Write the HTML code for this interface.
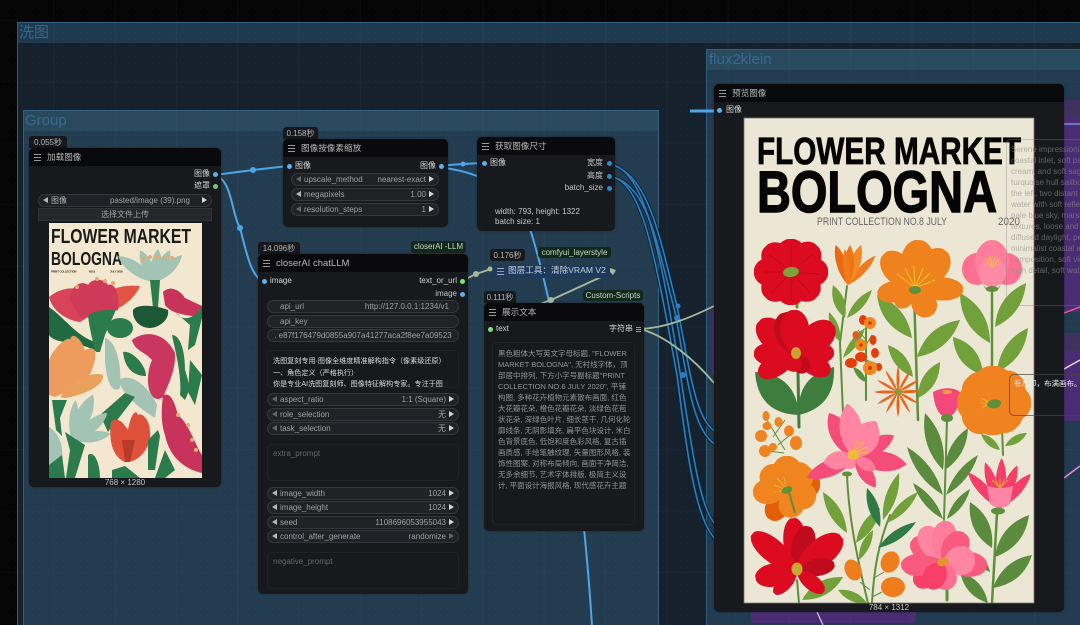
<!DOCTYPE html>
<html><head><meta charset="utf-8"><style>
html,body{margin:0;padding:0;background:#050505;width:1080px;height:625px;overflow:hidden}
#r{position:relative;width:1080px;height:625px;overflow:hidden;background:#050505;font-family:"Liberation Sans","Noto Sans CJK SC",sans-serif;font-size:8px;color:#c0c0c0;filter:blur(.3px)}
.a{position:absolute}
.g{position:absolute;box-sizing:border-box;border:1px solid #35607d;border-right:0;border-bottom:0}
.gh{position:absolute;left:0;right:0;top:0;height:20px}
.gt{position:absolute;left:1px;top:0;font-size:15px;line-height:20px;color:#386b8c;white-space:nowrap}
.n{position:absolute;background:#18191c;border-radius:5px;overflow:hidden;box-shadow:0 0 2px #0006}
.h{position:absolute;left:0;right:0;top:0;height:18px;background:#0a0a0c}
.m{position:absolute;left:5px;top:6px;width:7px;height:5px;border-top:1px solid #999;border-bottom:1px solid #999;box-sizing:content-box}
.m:after{content:"";position:absolute;left:0;right:0;top:2px;height:1px;background:#999}
.ti{position:absolute;left:18px;top:0;line-height:19px;font-size:9.5px;color:#b8b8b8;white-space:nowrap}
.t{position:absolute;white-space:nowrap;line-height:12px;height:12px}
.b{position:absolute;background:#16181b;color:#b4b4b4;border-radius:3px 3px 0 0;height:12px;line-height:13px;text-align:center;font-size:8px}
.tag{position:absolute;background:#12281a;color:#c8d8c8;border-radius:3px;line-height:12px;height:12px;text-align:center;font-size:8px;white-space:nowrap}
.w{position:absolute;box-sizing:border-box;height:13px;border:1px solid #36373c;border-radius:7px;background:#212226;color:#a0a0a0;line-height:11px;white-space:nowrap}
.w .k{position:absolute;left:12px}
.w .v{position:absolute;right:12px}
.l,.r{position:absolute;top:2px;width:0;height:0;border-top:3.5px solid transparent;border-bottom:3.5px solid transparent}
.l{left:4px;border-right:5px solid #b8b8b8}
.r{right:4px;border-left:5px solid #d8d8d8}
.l.d{border-right-color:#666}.r.d{border-left-color:#666}
.o{position:absolute;width:5px;height:5px;border-radius:50%}
.bx{position:absolute;box-sizing:border-box;border:1px solid #212226;border-radius:5px}
.ph{position:absolute;left:5px;top:3px;color:#666;line-height:12px}
svg{position:absolute;left:0;top:0}
</style></head><body><div id="r">

<!-- groups -->
<div class="g" style="left:17px;top:22px;width:1063px;height:603px;background:#15222d"><div class="gh" style="background:#1f3a50"></div><div class="gt" style="color:#376785">洗图</div></div>
<div class="g" style="left:23px;top:110px;width:636px;height:515px;background:#233c50;border-right:1px solid #35607d"><div class="gh" style="background:#29495f"></div><div class="gt">Group</div></div>
<div class="g" style="left:706px;top:49px;width:374px;height:576px;background:#223b50"><div class="gh" style="background:#29495f"></div><div class="gt" style="left:2px">flux2klein</div></div>
<div class="a" style="left:1064px;top:100px;width:16px;height:212px;background:#4a2c74"></div>
<div class="a" style="left:1064px;top:100px;width:16px;height:18px;background:#3f3260"></div>
<div class="a" style="left:1064px;top:333px;width:16px;height:88px;background:#4a2c74"></div>
<div class="a" style="left:1064px;top:333px;width:16px;height:18px;background:#3f3260"></div>
<div class="a" style="left:712px;top:310px;width:2px;height:64px;background:#4a2c74"></div>
<div class="a" style="left:751px;top:600px;width:165px;height:23px;background:#4a2c74;border-radius:0 0 4px 4px"></div>
<!-- grid -->
<div class="a" style="left:0;top:0;width:1080px;height:625px;background-image:linear-gradient(90deg,rgba(255,255,255,.025) 1px,transparent 1px),linear-gradient(rgba(255,255,255,.02) 1px,transparent 1px),radial-gradient(rgba(255,255,255,.035) .6px,transparent .8px);background-size:61.3px 61.3px,61.3px 61.3px,6px 6px;background-position:-8px 20px,-8px 20px,0 0"></div>

<!-- wires -->
<svg width="1080" height="625" viewBox="0 0 1080 625" fill="none">
<g stroke="#0c2438" stroke-width="3.6">
<path d="M610 164C650 175 660 240 677 306C690 370 695 420 716 432"/><path d="M610 176C648 185 656 240 675 312C688 380 692 430 716 445"/>
<path d="M610 164C645 170 660 250 680 372C692 450 700 510 716 525"/><path d="M610 176C642 182 654 250 677 375C688 460 696 520 716 540"/>
</g>
<g stroke="#2e7dbc" stroke-width="1.6">
<path d="M610 164C650 175 660 240 677 306C690 370 695 420 716 432"/><path d="M610 176C648 185 656 240 675 312C688 380 692 430 716 445"/>
<path d="M610 164C645 170 660 250 680 372C692 450 700 510 716 525"/><path d="M610 176C642 182 654 250 677 375C688 460 696 520 716 540"/>
</g>
<g fill="#2e7dbc"><circle cx="678" cy="306" r="2.5"/><circle cx="677" cy="318" r="3"/><circle cx="683" cy="375" r="3"/></g>
<g stroke="#4da6ea" stroke-width="2">
<path d="M215 175L253 170L288 166"/>
<path d="M217 176C232 182 232 215 240 228C246 250 250 274 262 281"/>
<path d="M436 166L463 164L482 163"/>
<path d="M436 167C465 170 510 178 531 232C552 300 580 440 592 625"/>
</g>
<path d="M690 111H716" stroke="#4da6ea" stroke-width="3"/>
<g fill="#4da6ea"><circle cx="253" cy="170" r="3"/><circle cx="240" cy="228" r="3"/><circle cx="463" cy="164" r="2.5"/></g>
<g stroke="#a8b89a" stroke-width="1.8">
<path d="M462 281L476 274L491 269"/>
<path d="M612 272L551 300L540 304"/>
<path d="M640 329C665 328 690 318 714 306"/>
<path d="M640 329C665 335 695 360 714 383"/>
</g>
<g fill="#a8b89a"><circle cx="476" cy="274" r="3"/><circle cx="551" cy="300" r="3"/><path d="M608 268L614 270L611 275L606 274Z"/></g>
<path d="M1064 124H1080" stroke="#7a8be0" stroke-width="1.5"/>
<path d="M1064 313L1080 307" stroke="#e85a90" stroke-width="1.5"/>
<path d="M1064 369L1080 360" stroke="#e6d8e6" stroke-width="1.5"/>
<path d="M1064 478L1080 466" stroke="#f08ae0" stroke-width="1.5"/>
<path d="M817 612L823 625" stroke="#cfc8d8" stroke-width="1.2"/>
</svg>

<!-- load image -->
<div class="b" style="left:29px;top:136px;width:38px">0.055秒</div>
<div class="n" style="left:29px;top:148px;width:192px;height:339px">
<div class="h"></div><div class="m"></div><div class="ti" style="font-size:8.6px">加载图像</div>
<div class="t" style="right:11px;top:20px;color:#d4d4d4">图像</div><div class="o" style="left:184px;top:24px;background:#5ab0f0"></div>
<div class="t" style="right:11px;top:32px;color:#d4d4d4">遮罩</div><div class="o" style="left:184px;top:36px;background:#74c77a"></div>
<div class="w" style="left:9px;top:46px;width:174px"><i class="l"></i><span class="k" style="color:#b4b4b4">图像</span><span class="v" style="right:21px">pasted/image (39).png</span><i class="r"></i></div>
<div class="a" style="left:9px;top:60px;width:174px;height:13px;background:#26272b;border:1px solid #333;box-sizing:border-box;text-align:center;line-height:11px;color:#a0a0a0">选择文件上传</div>
<div class="a" style="left:0;right:0;top:330px;text-align:center;line-height:10px;color:#c4c4c4;font-size:8px">768 × 1280</div>
</div>
<svg width="1080" height="625" viewBox="0 0 1080 625">
<defs>
<clipPath id="cp1"><rect x="49" y="223" width="153" height="255"/></clipPath>
<clipPath id="cp2"><rect x="744" y="118" width="290" height="485"/></clipPath>
<path id="p" d="M0 0C-.65-.25-.6-.9-.1-1C0-1 0-1 .1-1C.6-.9.65-.25 0 0Z"/>
<path id="q" d="M0 0C-.5-.3-.5-.75 0-1C.5-.75.5-.3 0 0Z"/>
</defs>
<g clip-path="url(#cp1)">
<rect x="49" y="223" width="153" height="255" fill="#f3e8cf"/>
<g fill="#1a1a1a" font-family="Liberation Sans" font-weight="bold">
<text x="51" y="243" font-size="20.5" textLength="140" lengthAdjust="spacingAndGlyphs">FLOWER MARKET</text>
<text x="51" y="265" font-size="18" textLength="71" lengthAdjust="spacingAndGlyphs">BOLOGNA</text>
<text x="51" y="272.5" font-size="2.6">PRINT COLLECTION</text><text x="89" y="272.5" font-size="2.6">NO.8</text><text x="110" y="272.5" font-size="2.6">JULY 2020</text>
</g>
<!-- teal top -->
<g fill="#a3c4b4"><use href="#q" transform="translate(155 282) rotate(-55) scale(16 45)"/><use href="#q" transform="translate(155 282) rotate(-25) scale(14 35)"/><use href="#q" transform="translate(155 282) rotate(5) scale(14 33)"/><use href="#q" transform="translate(155 282) rotate(25) scale(14 35)"/><use href="#q" transform="translate(155 282) rotate(45) scale(14 38)"/></g>
<g fill="#e8a96a"><circle cx="143" cy="259" r="2"/><circle cx="150" cy="257" r="2"/><circle cx="157" cy="257" r="2"/><circle cx="165" cy="258" r="2"/><circle cx="172" cy="258" r="2"/></g>
<path d="M150 280L160 280L158 308L153 308Z" fill="#2b7b4c"/>
<path d="M133 310C138 303 158 306 168 310C170 320 158 328 150 328C140 328 132 320 133 310Z" fill="#1d5836"/>
<!-- coral flower -->
<path d="M49 297C70 280 95 290 100 310L80 322C65 320 52 310 49 297Z" fill="#d9435a"/>
<path d="M140 286C120 284 100 290 95 312L112 312C125 305 135 298 140 286Z" fill="#e25544"/>
<path d="M70 300C70 285 82 280 88 285C92 278 104 278 108 285C114 282 120 292 118 310L80 318Z" fill="#cf3a5a"/>
<g fill="#e8a96a"><circle cx="77" cy="287" r="2"/><circle cx="97" cy="279" r="2"/><circle cx="105" cy="281" r="2"/><circle cx="113" cy="283" r="2"/></g>
<path d="M49 307C65 318 75 335 95 342L100 350L97 352C80 340 55 345 49 335Z" fill="#1f6a41"/>
<path d="M88 316C90 310 120 308 115 312L105 335L100 352L96 352C92 340 90 330 88 316Z" fill="#2b7b4c"/>
<ellipse cx="120" cy="328" rx="13" ry="10" fill="#2b7b4c"/>
<!-- right top pink -->
<path d="M163 292C170 285 180 290 185 298L202 306L202 318C190 315 172 315 165 305Z" fill="#c8335c"/>
<path d="M175 312C185 325 198 315 202 305L202 318L195 345L188 350L190 325Z" fill="#2b7b4c"/>
<!-- right pink mid -->
<path d="M132 340C145 330 165 332 175 353C176 370 168 385 163 397C155 403 148 395 148 380C148 370 150 365 152 360C145 352 134 350 132 340Z" fill="#c9365f"/>
<path d="M172 335C180 335 185 350 185 370C190 385 190 390 185 400L180 395C182 375 175 350 172 335Z" fill="#2b7b4c"/>
<path d="M190 360L202 375L195 405L188 392Z" fill="#2b7b4c"/>
<!-- orange -->
<path d="M49 360C55 345 70 335 70 340C72 330 82 340 85 350C95 345 100 350 90 375C85 385 70 390 55 397L49 395Z" fill="#ee9b5e"/>
<path d="M60 397C70 385 90 370 103 375C105 385 85 395 65 398Z" fill="#e8a25c"/>
<path d="M52 400L67 400L60 418L62 436L56 430Z" fill="#2b7b4c"/>
<!-- teal centre -->
<path d="M105 338C116 340 122 365 120 388C112 395 106 380 105 360Z" fill="#a3c4b4"/>
<path d="M118 380C130 372 148 385 157 405L155 418C140 408 125 398 118 380Z" fill="#a3c4b4"/>
<path d="M123 352C132 350 146 365 146 376C135 376 125 370 123 352Z" fill="#2b7b4c"/>
<path d="M100 415L125 393L135 397L108 432Z" fill="#2b7b4c"/>
<!-- teal lower -->
<g fill="#a3c4b4"><use href="#q" transform="translate(72 440) rotate(25) scale(20 50)"/><use href="#q" transform="translate(75 440) rotate(50) scale(16 42)"/><use href="#q" transform="translate(75 440) rotate(80) scale(14 36)"/><use href="#q" transform="translate(72 440) rotate(5) scale(12 40)"/></g>
<path d="M49 427C58 432 64 445 62 460L49 470Z" fill="#a3c4b4"/>
<path d="M65 432L85 445L75 478L66 478L70 450Z" fill="#2b7b4c"/>
<path d="M49 465L62 455L65 478H49Z" fill="#2b7b4c"/>
<path d="M88 455C95 450 100 465 100 478H88Z" fill="#2b7b4c"/>
<!-- red flower -->
<path d="M111 422C118 415 125 425 128 430C130 418 135 407 138 415C142 412 150 420 150 432C152 445 140 463 125 462C115 458 108 445 111 422Z" fill="#e0513c"/>
<path d="M122 440H135L130 462H125Z" fill="#b83b2a"/>
<path d="M112 470L125 466L140 478H112Z" fill="#2b7b4c"/>
<!-- pink lower -->
<path d="M163 395C172 392 175 405 178 415C190 425 195 445 202 455L202 473C188 470 170 460 165 435C160 420 162 405 163 395Z" fill="#c8335c"/>
<g fill="#e8a96a"><circle cx="178" cy="415" r="2"/><circle cx="188" cy="425" r="2"/><circle cx="192" cy="440" r="2"/><circle cx="196" cy="450" r="2"/></g>
<path d="M165 450L175 470L165 478H155Z" fill="#2b7b4c"/>
<path d="M148 440L158 430L160 436L155 470H148Z" fill="#2b7b4c"/>
</g>
</svg>

<!-- scale node -->
<div class="b" style="left:283px;top:127px;width:35px">0.158秒</div>
<div class="n" style="left:283px;top:139px;width:165px;height:88px">
<div class="h"></div><div class="m"></div><div class="ti" style="font-size:8.6px">图像按像素缩放</div>
<div class="o" style="left:4px;top:25px;background:#5ab0f0"></div><div class="t" style="left:12px;top:21px;color:#d4d4d4">图像</div>
<div class="t" style="right:12px;top:21px;color:#d4d4d4">图像</div><div class="o" style="left:156px;top:25px;background:#5ab0f0"></div>
<div class="w" style="left:8px;top:34px;width:148px"><i class="l d"></i><span class="k">upscale_method</span><span class="v">nearest-exact</span><i class="r"></i></div>
<div class="w" style="left:8px;top:49px;width:148px"><i class="l"></i><span class="k">megapixels</span><span class="v">1.00</span><i class="r"></i></div>
<div class="w" style="left:8px;top:64px;width:148px"><i class="l d"></i><span class="k">resolution_steps</span><span class="v">1</span><i class="r"></i></div>
</div>

<!-- get size -->
<div class="n" style="left:477px;top:137px;width:138px;height:94px">
<div class="h"></div><div class="m"></div><div class="ti" style="font-size:8.6px">获取图像尺寸</div>
<div class="o" style="left:5px;top:24px;background:#5ab0f0"></div><div class="t" style="left:13px;top:20px;color:#d4d4d4">图像</div>
<div class="t" style="right:12px;top:20px;color:#c4c4c4">宽度</div><div class="o" style="left:130px;top:24px;background:#2f8ac8"></div>
<div class="t" style="right:12px;top:33px;color:#c4c4c4">高度</div><div class="o" style="left:130px;top:37px;background:#2f8ac8"></div>
<div class="t" style="right:12px;top:45px;color:#c4c4c4">batch_size</div><div class="o" style="left:130px;top:49px;background:#2f8ac8"></div>
<div class="t" style="left:18px;top:69px;color:#c8c8c8">width: 793, height: 1322</div>
<div class="t" style="left:18px;top:79px;color:#c8c8c8">batch size: 1</div>
</div>

<!-- closerAI -->
<div class="b" style="left:258px;top:242px;width:42px">14.096秒</div>
<div class="tag" style="left:411px;top:241px;width:55px">closerAI -LLM</div>
<div class="n" style="left:258px;top:254px;width:210px;height:340px">
<div class="h"></div><div class="m"></div><div class="ti">closerAI chatLLM</div>
<div class="o" style="left:4px;top:25px;background:#5ab0f0"></div><div class="t" style="left:12px;top:21px;color:#d4d4d4">image</div>
<div class="t" style="right:11px;top:21px;color:#d4d4d4">text_or_url</div><div class="o" style="left:202px;top:25px;background:#7fe07a"></div>
<div class="t" style="right:11px;top:34px;color:#c4c4c4">image</div><div class="o" style="left:202px;top:38px;background:#5ab0f0"></div>
<div class="w" style="left:9px;top:46px;width:192px"><span class="k">api_url</span><span class="v" style="right:9px">http://127.0.0.1:1234/v1</span></div>
<div class="w" style="left:9px;top:61px;width:192px"><span class="k">api_key</span></div>
<div class="w" style="left:9px;top:75px;width:192px;text-align:center">. e87f176479d0855a907a41277aca2f8ee7a09523</div>
<div class="bx" style="left:9px;top:96px;width:192px;height:38px;overflow:hidden"><div style="position:absolute;left:5px;top:5px;width:186px;white-space:nowrap;line-height:11.5px;color:#dcdcdc;font-size:7.1px">洗图复刻专用·图像全维度精准解构指令（像素级还原）<br>一、角色定义（严格执行）<br>你是专业AI洗图复刻师、图像特征解构专家。专注于图</div></div>
<div class="w" style="left:9px;top:139px;width:192px"><i class="l d"></i><span class="k">aspect_ratio</span><span class="v">1:1 (Square)</span><i class="r"></i></div>
<div class="w" style="left:9px;top:154px;width:192px"><i class="l d"></i><span class="k">role_selection</span><span class="v">无</span><i class="r"></i></div>
<div class="w" style="left:9px;top:168px;width:192px"><i class="l d"></i><span class="k">task_selection</span><span class="v">无</span><i class="r"></i></div>
<div class="bx" style="left:9px;top:190px;width:192px;height:37px"><div class="ph">extra_prompt</div></div>
<div class="w" style="left:9px;top:233px;width:192px"><i class="l"></i><span class="k">image_width</span><span class="v">1024</span><i class="r"></i></div>
<div class="w" style="left:9px;top:247px;width:192px"><i class="l"></i><span class="k">image_height</span><span class="v">1024</span><i class="r"></i></div>
<div class="w" style="left:9px;top:262px;width:192px"><i class="l"></i><span class="k">seed</span><span class="v">1108696053955043</span><i class="r"></i></div>
<div class="w" style="left:9px;top:276px;width:192px"><i class="l"></i><span class="k">control_after_generate</span><span class="v">randomize</span><i class="r d"></i></div>
<div class="bx" style="left:9px;top:298px;width:192px;height:37px"><div class="ph">negative_prompt</div></div>
</div>

<!-- layerstyle -->
<div class="b" style="left:490px;top:249px;width:35px;border-radius:3px">0.176秒</div>
<div class="tag" style="left:538px;top:247px;width:73px;height:11px;line-height:11px">comfyui_layerstyle</div>
<div class="a" style="left:490px;top:265px;width:122px;height:13px;background:#1d3a5c;border-radius:6px"></div>
<div class="m a" style="left:497px;top:268px;border-color:#aab;"></div>
<div class="t" style="left:508px;top:264px;font-size:8.6px;line-height:13px;color:#c4ccd8">图层工具：清除VRAM V2</div>
<svg width="1080" height="625" viewBox="0 0 1080 625"><circle cx="490" cy="269" r="2.5" fill="#a8b89a"/><path d="M610 268L616 270L613 275L610 272Z" fill="#a8b89a"/></svg>

<!-- show text -->
<div class="b" style="left:484px;top:291px;width:32px">0.111秒</div>
<div class="tag" style="left:583px;top:290px;width:60px;height:11px;line-height:11px">Custom-Scripts</div>
<div class="n" style="left:484px;top:303px;width:160px;height:228px">
<div class="h"></div><div class="m"></div><div class="ti" style="font-size:8.6px">展示文本</div>
<div class="o" style="left:4px;top:24px;background:#7fe07a"></div><div class="t" style="left:12px;top:20px;color:#d4d4d4">text</div>
<div class="t" style="right:11px;top:20px;color:#d4d4d4">字符串</div>
<div class="a" style="left:152px;top:24px;width:5px;height:5px;background:repeating-linear-gradient(#5ac05a 0 1px,#18191c 1px 2px)"></div>
<div class="bx" style="left:8px;top:39px;width:143px;height:183px"></div>
<div class="a" style="left:14px;top:44.5px;white-space:nowrap;line-height:11px;color:#949494;font-size:7.5px">黑色粗体大写英文字母标题, "FLOWER<br>MARKET BOLOGNA", 无衬线字体，顶<br>部居中排列, 下方小字号副标题"PRINT<br>COLLECTION NO.6 JULY 2020", 平铺<br>构图, 多种花卉植物元素散布画面, 红色<br>大花瓣花朵, 橙色花瓣花朵, 淡绿色花苞<br>状花朵, 深绿色叶片, 细长茎干, 几何化轮<br>廓线条, 无阴影填充, 扁平色块设计, 米白<br>色背景底色, 低饱和度色彩风格, 复古插<br>画质感, 手绘笔触纹理, 矢量图形风格, 装<br>饰性图案, 对称布局倾向, 画面干净简洁,<br>无多余细节, 艺术字体排版, 极简主义设<br>计, 平面设计海报风格, 现代感花卉主题</div>
</div>

<!-- preview -->
<div class="n" style="left:714px;top:84px;width:350px;height:528px">
<div class="h"></div><div class="m"></div><div class="ti" style="font-size:8.6px">预览图像</div>
<div class="o" style="left:3px;top:24px;background:#5ab0f0"></div><div class="t" style="left:12px;top:20px;color:#d4d4d4">图像</div>
<div class="a" style="left:0;width:290px;margin-left:30px;top:519px;text-align:center;line-height:10px;color:#c4c4c4;font-size:8px">784 × 1312</div>
</div>
<svg width="1080" height="625" viewBox="0 0 1080 625">
<g clip-path="url(#cp2)">
<rect x="744" y="118" width="290" height="485" fill="#ece7d5"/>
<g font-family="Liberation Sans" fill="#050505" font-weight="bold">
<text x="757" y="164" font-size="38" textLength="264" lengthAdjust="spacingAndGlyphs" stroke="#050505" stroke-width=".8">FLOWER MARKET</text>
<text x="757" y="212" font-size="58" textLength="240" lengthAdjust="spacingAndGlyphs" stroke="#050505" stroke-width="1.4">BOLOGNA</text>
</g>
<g font-family="Liberation Sans" fill="#666" font-size="11"><text x="817" y="225" textLength="130" lengthAdjust="spacingAndGlyphs">PRINT COLLECTION NO.8 JULY</text><text x="998" y="225" textLength="22" lengthAdjust="spacingAndGlyphs">2020</text></g>

<!-- stems -->
<g fill="none" stroke-linecap="round">
<g stroke="#5e8f3a" stroke-width="2">
<path d="M847 286L840 343L843 413"/>
<path d="M866 328V400"/>
<path d="M914 292L918 420" stroke-width="2.5"/>
<path d="M992 290V367" stroke-width="2.5"/>
<path d="M1002 427L1003 455"/>
<path d="M947 420L944 520" stroke-width="2"/>
<path d="M847 473C848 510 855 550 868 603"/>
<path d="M872 603C874 570 878 545 890 515"/>
<path d="M997 513L992 603" stroke-width="2.5"/>
<path d="M947 585V600" stroke-width="3"/>
<path d="M797 300V307" stroke-width="3"/>
<path d="M798 372L799 427" stroke-width="3" stroke="#3e7d3e"/>
<path d="M797 580L799 603" stroke-width="2"/>
</g>
</g>
<!-- light leaves -->
<g fill="#72a03a">
<path d="M845 318Q849 298 833 285Q829 305 845 318Z"/><path d="M847 318Q866 310 872 290Q853 298 847 318Z"/><path d="M840 342Q842 324 829 312Q827 330 840 342Z"/><path d="M843 358Q860 347 865 328Q848 339 843 358Z"/>
<path d="M912 338Q907 306 877 295Q881 327 912 338Z"/><path d="M917 357Q949 351 960 320Q927 325 917 357Z"/><path d="M913 377Q910 353 888 345Q891 368 913 377Z"/><path d="M918 398Q940 387 940 362Q918 373 918 398Z"/>
<path d="M990 343Q990 309 960 293Q960 327 990 343Z"/><path d="M995 327Q1023 314 1026 283Q997 296 995 327Z"/><path d="M983 375Q981 345 953 337Q955 366 983 375Z"/><path d="M997 372Q1025 359 1028 328Q1000 341 997 372Z"/>
<path d="M1000 450Q995 436 981 434Q986 448 1000 450Z"/><path d="M1005 446Q1020 446 1027 433Q1012 433 1005 446Z"/>
<path d="M847 533Q845 506 823 492Q825 518 847 533Z"/><path d="M856 543Q877 531 880 508Q859 519 856 543Z"/><path d="M859 560Q873 548 873 530Q858 541 859 560Z"/>
<path d="M887 523Q909 514 918 492Q896 501 887 523Z"/><path d="M883 520Q901 500 899 473Q881 493 883 520Z"/>
<path d="M867 603Q856 588 838 590Q849 605 867 603Z"/><path d="M802 600Q830 600 843 577Q815 576 802 600Z"/>
</g>
<!-- mid green leaves -->
<g fill="#5b8c3e">
<path d="M943 470Q948 437 925 413Q920 446 943 470Z"/><path d="M945 470Q967 455 968 428Q946 443 945 470Z"/>
<path d="M943 495Q935 464 907 447Q915 478 943 495Z"/><path d="M946 495Q970 481 978 455Q954 469 946 495Z"/>
<path d="M943 519Q935 495 913 483Q921 507 943 519Z"/><path d="M947 519Q965 509 970 489Q952 499 947 519Z"/>
<path d="M988 603Q983 579 960 572Q965 596 988 603Z"/>
<path d="M992 548Q995 518 970 502Q967 532 992 548Z"/><path d="M995 557Q1025 546 1029 515Q999 526 995 557Z"/><path d="M993 588Q1023 583 1032 555Q1003 560 993 588Z"/><path d="M990 572Q988 560 975 555Q978 568 990 572Z"/>
</g>
<g fill="#3e7d3e">
<path d="M799 415Q796 374 755 372Q758 414 799 415Z"/><path d="M799 415Q836 406 834 367Q796 376 799 415Z"/>
</g>
<g fill="#2f7a45">
<path d="M880 527Q883 504 867 488Q864 511 880 527Z"/><path d="M878 548Q902 543 916 522Q892 527 878 548Z"/>
</g>

<!-- red 1 -->
<g fill="#dc0b20" transform="translate(791 272)">
<use href="#p" transform="scale(30 33)"/><use href="#p" transform="rotate(45) scale(30 37)"/><use href="#p" transform="rotate(90) scale(30 37)"/><use href="#p" transform="rotate(135) scale(30 36)"/><use href="#p" transform="rotate(180) scale(30 33)"/><use href="#p" transform="rotate(225) scale(30 36)"/><use href="#p" transform="rotate(270) scale(30 37)"/><use href="#p" transform="rotate(315) scale(30 36)"/>
<g stroke="#b00a1c" stroke-width=".7"><path d="M0 0V-28M0 0L22-18M0 0L28 2M0 0L20 22M0 0V28M0 0L-20 22M0 0H-28M0 0L-22-18"/></g>
<ellipse rx="8" ry="5" fill="#80a03c" transform="rotate(-8)"/>
</g>
<!-- tulip -->
<g transform="translate(848 285)">
<use href="#q" fill="#e8690f" transform="rotate(-17) scale(13 42)"/>
<use href="#q" fill="#f07a1c" transform="rotate(43) scale(10 40)"/>
<use href="#q" fill="#f58a25" transform="rotate(18) scale(14 42)"/>
<use href="#q" fill="#ee7514" transform="rotate(3) scale(13 40)"/>
<use href="#q" fill="#f07a1c" transform="rotate(-5) scale(9 36)"/>
</g>
<!-- orange 1 -->
<g fill="#f0821e" transform="translate(915 288)">
<use href="#p" transform="rotate(5) scale(34 48)"/><use href="#p" transform="rotate(-42) scale(30 46)"/><use href="#p" transform="rotate(40) scale(32 48)"/><use href="#p" transform="rotate(-100) scale(22 38)"/><use href="#p" transform="rotate(92) scale(24 48)"/><use href="#p" transform="rotate(150) scale(26 32)"/><use href="#p" transform="rotate(-135) scale(18 26)"/>
<g stroke="#f4c22c" stroke-width="1"><path d="M0 0L-18-14M0 0L-10-20M0 0L-1-22M0 0L8-20M0 0L15-15M0 0L20-8"/></g>
<ellipse cy="2" rx="6" ry="4" fill="#5e8f3a"/>
</g>
<!-- pink 1 -->
<g>
<ellipse cx="977" cy="269" rx="15" ry="16" fill="#ff6f92"/><ellipse cx="1007" cy="269" rx="15" ry="16" fill="#ff6f92"/>
<ellipse cx="992" cy="262" rx="17" ry="22" fill="#ff7d9c"/><ellipse cx="992" cy="272" rx="14" ry="15" fill="#ff8aa5"/>
<g stroke="#f4c22c" stroke-width="1"><path d="M992 268L985 258M992 268L990 256M992 268L995 256M992 268L1000 258"/></g>
<path d="M983 285Q992 295 1001 285L997 291H987Z" fill="#5e8f3a"/>
<ellipse cx="992" cy="289" rx="6" ry="3" fill="#5e8f3a"/>
</g>
<!-- red 2 -->
<g transform="translate(796 355)" fill="#dc0b20">
<use href="#p" transform="rotate(-48) scale(30 50)"/><use href="#p" transform="rotate(50) scale(30 48)"/><use href="#p" transform="rotate(-88) scale(24 42)"/><use href="#p" transform="rotate(86) scale(22 38)"/><use href="#p" transform="rotate(-118) scale(22 42)"/><use href="#p" transform="rotate(118) scale(22 38)"/>
<use href="#p" fill="#c00a1e" transform="rotate(-16) scale(30 44)"/><use href="#p" transform="rotate(-3) scale(30 45)"/><use href="#p" fill="#c00a1e" transform="rotate(150) scale(18 20)"/><use href="#p" transform="rotate(-165) scale(18 17)"/>
<ellipse cy="-2" rx="5" ry="6" fill="#c9a32e"/>
</g>
<!-- orange cluster -->
<g fill="#5e8f3a"><path d="M853 367Q857 380 866 382Q864 370 853 367Z"/></g>
<g stroke="#5e8f3a" stroke-width="1" fill="none"><path d="M866 340L858 330M866 345L872 335M866 360L852 360M866 360L880 365"/></g>
<g fill="#e43d0c"><ellipse cx="863" cy="320" rx="4" ry="5"/><ellipse cx="856" cy="335" rx="3.5" ry="4" fill="#e05a1e"/><ellipse cx="873" cy="340" rx="3.5" ry="5"/><ellipse cx="861" cy="357" rx="6" ry="5"/><ellipse cx="875" cy="353" rx="4" ry="5"/><ellipse cx="879" cy="367" rx="3" ry="4"/><ellipse cx="851" cy="363" rx="6" ry="5"/></g>
<g fill="#f08820"><circle cx="870" cy="323" r="6"/><circle cx="861" cy="345" r="6"/><circle cx="870" cy="368" r="7"/></g>
<g fill="#d63a10"><circle cx="870" cy="323" r="1.8"/><circle cx="861" cy="345" r="1.8"/><circle cx="870" cy="368" r="2"/></g>
<!-- starburst -->
<g transform="translate(898 392)" fill="#e8651a">
<use href="#q" transform="scale(4 26)"/><use href="#q" transform="rotate(30) scale(3.5 25)"/><use href="#q" transform="rotate(60) scale(3.5 24)"/><use href="#q" transform="rotate(88) scale(4 23)"/><use href="#q" transform="rotate(120) scale(3.5 23)"/><use href="#q" transform="rotate(150) scale(3.5 24)"/><use href="#q" transform="rotate(180) scale(4 25)"/><use href="#q" transform="rotate(210) scale(3.5 24)"/><use href="#q" transform="rotate(240) scale(3.5 24)"/><use href="#q" transform="rotate(270) scale(4 24)"/><use href="#q" transform="rotate(300) scale(3.5 24)"/><use href="#q" transform="rotate(330) scale(3.5 25)"/>
<circle r="3.5" fill="#8a9a3a"/>
</g>
<!-- small pink tulip -->
<path d="M933 392C940 388 953 386 960 392C960 405 955 416 947 418C938 416 934 405 933 392Z" fill="#f5487a"/>
<ellipse cx="947" cy="392" rx="5" ry="2" fill="#f59a3a"/>
<ellipse cx="947" cy="418" rx="6" ry="4" fill="#5e8f3a"/>
<!-- big orange -->
<g transform="translate(993 403)" fill="#f0831f">
<use href="#p" transform="scale(40 37)"/><use href="#p" transform="rotate(45) scale(36 38)"/><use href="#p" transform="rotate(90) scale(36 38)"/><use href="#p" transform="rotate(135) scale(36 34)"/><use href="#p" transform="rotate(180) scale(38 32)"/><use href="#p" transform="rotate(225) scale(36 36)"/><use href="#p" transform="rotate(270) scale(36 36)"/><use href="#p" transform="rotate(315) scale(36 36)"/>
<g stroke="#f4c22c" stroke-width=".8"><path d="M-3 0H-12M-3 0L-12-5M-3 0L-11 5"/></g>
<ellipse cx="1" cy="1" rx="7" ry="4.5" fill="#5e8f3a" transform="rotate(-10)"/>
</g>
<!-- buds -->
<g stroke="#5e8f3a" stroke-width="1" fill="none"><path d="M767 420L785 450M773 437L785 420M778 445L790 435M784 453L760 450"/></g>
<g fill="#f0831f"><ellipse cx="766" cy="416" rx="3.5" ry="5"/><ellipse cx="767" cy="426" rx="4.5" ry="4"/><ellipse cx="778.5" cy="422" rx="4" ry="5"/><ellipse cx="789" cy="431" rx="5" ry="5.5"/><ellipse cx="761" cy="436" rx="6" ry="6"/><ellipse cx="796" cy="443" rx="6" ry="7"/><ellipse cx="765" cy="451" rx="6" ry="6"/><ellipse cx="773" cy="447" rx="4" ry="4"/></g>
<!-- orange small -->
<g transform="translate(787 490)">
<use href="#p" fill="#e35f0a" transform="rotate(70) scale(32 34)"/><use href="#p" fill="#e35f0a" transform="rotate(210) scale(24 34)"/>
<g fill="#f0841f"><use href="#p" transform="scale(30 34)"/><use href="#p" transform="rotate(42) scale(30 32)"/><use href="#p" transform="rotate(110) scale(28 30)"/><use href="#p" transform="rotate(165) scale(26 28)"/><use href="#p" transform="rotate(-95) scale(26 34)"/><use href="#p" transform="rotate(-48) scale(28 32)"/></g>
<g stroke="#f4c22c" stroke-width=".8"><path d="M0 0L-10-12M0 0L-13-5M0 0L-3-13M0 0L-13 2"/></g>
<ellipse rx="5.5" ry="3.5" fill="#5e8f3a" transform="rotate(-20)"/>
<path d="M2 2L8 23" stroke="#5e8f3a" stroke-width="2"/>
</g>
<!-- big pink -->
<g transform="translate(855 458)">
<use href="#q" fill="#f54d7a" transform="rotate(-112) scale(22 52)"/><use href="#q" fill="#f54d7a" transform="rotate(-30) scale(28 52)"/><use href="#q" fill="#f54d7a" transform="rotate(30) scale(32 42)"/><use href="#q" fill="#f54d7a" transform="rotate(97) scale(26 52)"/><use href="#q" fill="#f54d7a" transform="rotate(145) scale(18 36)"/><use href="#q" fill="#f54d7a" transform="rotate(60) scale(22 45)"/>
<use href="#q" fill="#ff85a2" transform="rotate(-98) scale(24 32)"/><use href="#q" fill="#ff85a2" transform="rotate(-8) scale(30 55)"/><use href="#q" fill="#ff85a2" transform="rotate(28) scale(36 42)"/><use href="#q" fill="#ff7a9a" transform="rotate(120) scale(16 24)"/><use href="#q" fill="#ff85a2" transform="rotate(-135) scale(16 14)"/>
<g stroke="#f4c22c" stroke-width="1"><path d="M-2-4L8-16M-2-4L12-11M-2-4L2-18M-2-4L13-6"/></g><ellipse cx="-2" cy="-3" rx="6" ry="5" fill="#f0b93a"/>
</g>
<ellipse cx="847" cy="474" rx="5" ry="2.5" fill="#5e8f3a"/>
<!-- orange buds -->
<g fill="#ef7d1c"><ellipse cx="853" cy="570" rx="8" ry="11" transform="rotate(-25 853 570)"/><ellipse cx="890" cy="562" rx="9" ry="11" transform="rotate(25 890 562)"/><ellipse cx="893" cy="587" rx="12" ry="10"/></g>
<g stroke="#5e8f3a" stroke-width="1"><path d="M860 582L870 590M884 572L874 578M882 592L872 597"/></g>
<!-- right pink tulip -->
<g transform="translate(1000 508)">
<use href="#q" fill="#f53f6b" transform="rotate(-42) scale(14 48)"/><use href="#q" fill="#f53f6b" transform="rotate(-18) scale(14 48)"/><use href="#q" fill="#f53f6b" transform="rotate(2) scale(14 50)"/><use href="#q" fill="#f53f6b" transform="rotate(22) scale(14 46)"/><use href="#q" fill="#f53f6b" transform="rotate(42) scale(14 46)"/>
<path d="M-13-22Q0-18 13-22L10-4Q0 4-10-4Z" fill="#ff85a5"/>
<g stroke="#e8a830" stroke-width=".9"><path d="M0-20V-30M0-20L-5-29M0-20L5-29M0-20L-8-28M0-20L8-28"/></g>
</g>
<ellipse cx="998" cy="511" rx="7" ry="3.5" fill="#5e8f3a"/>
<!-- bottom pink -->
<g transform="translate(943 562)">
<use href="#p" fill="#f85a80" transform="rotate(95) scale(26 44)"/><use href="#p" fill="#f85a80" transform="rotate(-55) scale(24 38)"/>
<use href="#p" fill="#f85a80" transform="rotate(-95) scale(22 42)"/><use href="#p" fill="#f83f68" transform="rotate(-130) scale(24 36)"/>
<use href="#p" fill="#ff85a2" transform="rotate(-30) scale(26 40)"/><use href="#p" fill="#ff7d9c" transform="rotate(4) scale(26 41)"/><use href="#p" fill="#f85a80" transform="rotate(38) scale(26 36)"/><use href="#p" fill="#ff85a2" transform="rotate(85) scale(30 32)"/><use href="#p" fill="#f85a80" transform="rotate(-100) scale(20 40)"/>
<use href="#p" fill="#ff6f92" transform="rotate(172) scale(24 28)"/><use href="#p" fill="#f83f68" transform="rotate(-150) scale(24 30)"/>
<ellipse cx="0" cy="0" rx="6" ry="4" fill="#e0982a" transform="rotate(-20)"/>
</g>
<!-- red bottom -->
<g transform="translate(797 571)" fill="#dc0b20">
<use href="#p" transform="rotate(-4) scale(24 53)"/><use href="#p" fill="#c00a1e" transform="rotate(14) scale(24 46)"/><use href="#p" transform="rotate(-50) scale(24 58)"/><use href="#p" transform="rotate(52) scale(28 56)"/><use href="#p" fill="#c00a1e" transform="rotate(80) scale(18 38)"/><use href="#p" transform="rotate(-100) scale(24 42)"/><use href="#p" transform="rotate(128) scale(16 34)"/><use href="#p" transform="rotate(-135) scale(14 32)"/>
<ellipse cy="-2" rx="5.5" ry="6.5" fill="#c9a832"/>
</g>
</g>
<rect x="744" y="118" width="290" height="485" fill="none" stroke="#777" stroke-width=".8"/>
</svg>

<!-- translucent overlay text -->
<div class="a" style="left:1006px;top:139px;width:74px;height:167px;box-sizing:border-box;border:1px solid rgba(130,130,130,.35);border-right:0;border-radius:4px 0 0 4px"></div>
<div class="a" style="left:1009px;top:374px;width:71px;height:42px;box-sizing:border-box;border:1px solid rgba(70,70,70,.7);border-right:0;border-radius:5px 0 0 5px"></div>
<div class="a" style="left:1011px;top:143.5px;width:69px;height:135px;overflow:hidden;white-space:nowrap;line-height:11px;color:rgba(140,140,140,.62);font-size:8px">Serene impressionist<br>coastal inlet, soft pa<br>cream, and soft sage<br>turquoise hull sailbo<br>the left, two distant<br>water with soft refle<br>pale blue sky, marsh<br>textures, loose and p<br>diffused daylight, pe<br>minimalist coastal ar<br>composition, soft vig<br>high detail, soft wate</div>
<div class="a" style="left:1014px;top:378px;width:66px;height:12px;overflow:hidden;white-space:nowrap;line-height:12px;color:#e8e8e8;font-size:7.5px">有水印，布满画布。</div>

</div></body></html>
